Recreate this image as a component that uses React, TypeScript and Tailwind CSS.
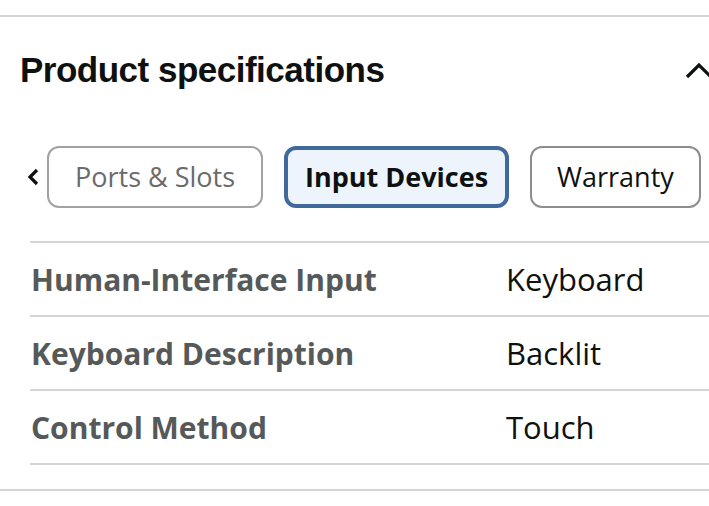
import { useState } from "react";

const tabs = ["Ports & Slots", "Input Devices", "Warranty"];

const specs = [
  { label: "Human-Interface Input", value: "Keyboard" },
  { label: "Keyboard Description", value: "Backlit" },
  { label: "Control Method", value: "Touch" },
];

export default function App() {
  const [active, setActive] = useState(1);

  return (
    <div className="w-[709px] h-[506px] overflow-hidden bg-white">
      <div className="h-[15px]" />
      <div className="border-t-2 border-[#d5d5d5]">
        {/* Header */}
        <div className="mt-[33px] flex items-center justify-between pl-[20px]">
          <h2 className="font-['Liberation_Sans',Arial,sans-serif] text-[35px] leading-[40px] font-bold tracking-[-0.5px] text-[#0f1111]">
            Product specifications
          </h2>
          <svg width="30" height="20" viewBox="0 0 30 20" className="mr-[-5px]">
            <path d="M3 17 L15 5 L27 17" fill="none" stroke="#0f1111" strokeWidth="3.2" />
          </svg>
        </div>

        {/* Tabs */}
        <div className="mt-[56px] flex items-center gap-[21px] font-['Open_Sans',sans-serif]">
          <div className="flex items-center gap-[7px] pl-[26px]">
            <svg width="14" height="20" viewBox="0 0 14 20">
              <path d="M11 3 L4 10 L11 17" fill="none" stroke="#0f1111" strokeWidth="3.2" />
            </svg>
            <button
              onClick={() => setActive(0)}
              className={`h-[62px] rounded-[12px] text-[27px] ${
                active === 0
                  ? "border-4 border-[#41699b] bg-[#edf4fb] px-[17px] font-bold text-[#0f1111]"
                  : "border-2 border-[#a2a2a2] bg-white px-[26px] text-[#6b6b6b]"
              }`}
            >
              {tabs[0]}
            </button>
          </div>
          {tabs.slice(1).map((t, i) => (
            <button
              key={t}
              onClick={() => setActive(i + 1)}
              className={`h-[62px] rounded-[12px] text-[27px] ${
                active === i + 1
                  ? "border-4 border-[#41699b] bg-[#edf4fb] px-[17px] font-bold text-[#0f1111]"
                  : "border-2 border-[#8d8d8d] bg-white px-[25px] text-[#0f1111]"
              }`}
            >
              {t}
            </button>
          ))}
        </div>

        {/* Spec table */}
        <div className="mt-[33px] ml-[30px] border-t-2 border-[#d5d5d5]">
          {specs.map((s) => (
            <div key={s.label} className="flex h-[74px] items-center border-b-2 border-[#d5d5d5]">
              <div className="w-[476px] pl-[1px] font-['Open_Sans',sans-serif] text-[30px] font-bold text-[#565959]">
                {s.label}
              </div>
              <div className="font-['Open_Sans',sans-serif] text-[31px] text-[#0f1111]">{s.value}</div>
            </div>
          ))}
        </div>

        <div className="mt-[24px] border-t-2 border-[#d5d5d5]" />
      </div>
    </div>
  );
}
